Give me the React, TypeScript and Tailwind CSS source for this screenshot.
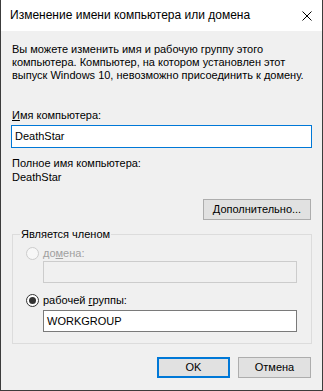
import React from "react";

function Radio({ checked, disabled }: { checked?: boolean; disabled?: boolean }) {
  return (
    <span
      className={
        disabled
          ? "flex h-[13px] w-[13px] shrink-0 items-center justify-center rounded-full border border-[#cccccc] bg-[#f7f7f7]"
          : "flex h-[13px] w-[13px] shrink-0 items-center justify-center rounded-full border border-[#333333] bg-white"
      }
    >
      {checked && <span className="h-[7px] w-[7px] rounded-full bg-[#333333]" />}
    </span>
  );
}

export default function App() {
  return (
    <div className="flex h-[391px] w-[323px] flex-col border-x border-b border-[#3c3c3c] bg-[#f0f0f0] font-['Liberation_Sans',Arial,sans-serif] text-[11px] leading-[13px] text-black">
      <div className="flex h-[31px] shrink-0 items-center justify-between bg-white pl-[9px] pr-[10px]">
        <span className="text-[12px] leading-[15px] whitespace-nowrap">
          Изменение имени компьютера или домена
        </span>
        <svg width="10" height="10" viewBox="0 0 10 10" className="block">
          <path d="M0.5 0.5 L9.5 9.5 M9.5 0.5 L0.5 9.5" stroke="#000" strokeWidth="1" />
        </svg>
      </div>
      <div className="flex flex-col px-[10px] pt-[12px]">
        <p className="pl-[1px] whitespace-nowrap">
          Вы можете изменить имя и рабочую группу этого
          <br />
          компьютера. Компьютер, на котором установлен этот
          <br />
          выпуск Windows 10, невозможно присоединить к домену.
        </p>
        <div className="mt-[27px] pl-[1px]">
          <u className="underline-offset-1">И</u>мя компьютера:
        </div>
        <div className="mt-[3px] flex h-[23px] items-center border border-[#0078d7] bg-white pl-[3px]">
          DeathStar
        </div>
        <div className="mt-[9px] pl-[1px]">Полное имя компьютера:</div>
        <div className="mt-[1px] pl-[1px]">DeathStar</div>
        <div className="mt-[15px] flex justify-end">
          <div className="mr-[1px] flex h-[21px] w-[108px] items-center justify-center border border-[#adadad] bg-[#e1e1e1]">
            <span>
              <u className="underline-offset-1">Д</u>ополнительно...
            </span>
          </div>
        </div>
        <fieldset className="mt-[8px] ml-[1px] border border-[#dcdcdc] pt-[6px] pb-[11px]">
          <legend className="ml-[7px] px-[1px] leading-[13px]">Является членом</legend>
          <div className="flex h-[13px] items-center gap-[4px] pl-[13px]">
            <Radio disabled />
            <span className="text-[#a0a0a0]">
              до<u className="underline-offset-1">м</u>ена:
            </span>
          </div>
          <div className="mt-[1px] ml-[30px] h-[22px] w-[254px] border border-[#cccccc] bg-[#f0f0f0]" />
          <div className="mt-[11px] flex h-[13px] items-center gap-[4px] pl-[13px]">
            <Radio checked />
            <span>
              рабочей <u className="underline-offset-1">г</u>руппы:
            </span>
          </div>
          <div className="mt-[3px] ml-[30px] flex h-[22px] w-[254px] items-center border border-[#7a7a7a] bg-white pl-[3px]">
            WORKGROUP
          </div>
        </fieldset>
        <div className="mt-[13px] mr-[1px] flex justify-end gap-[8px]">
          <div className="flex h-[21px] w-[73px] items-center justify-center border-2 border-[#0078d7] bg-[#e1e1e1]">
            OK
          </div>
          <div className="flex h-[21px] w-[73px] items-center justify-center border border-[#adadad] bg-[#e1e1e1]">
            Отмена
          </div>
        </div>
      </div>
    </div>
  );
}
